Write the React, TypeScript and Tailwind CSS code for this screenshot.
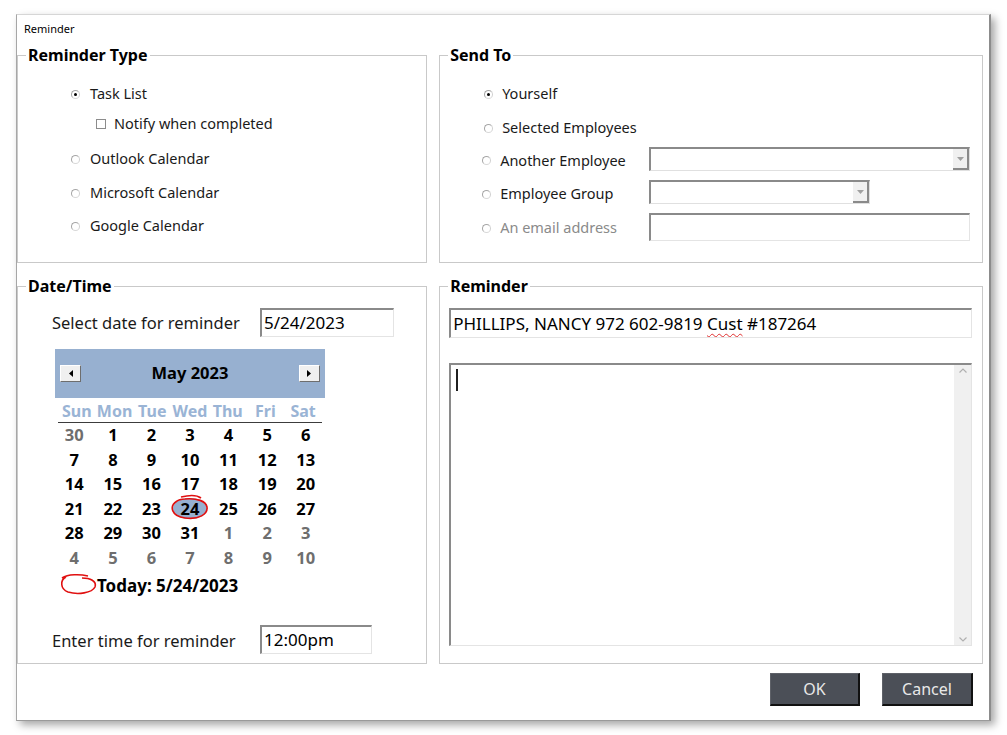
import React from "react";

function Radio({ checked }: { checked?: boolean }) {
  return (
    <span className="inline-flex w-[9px] h-[9px] rounded-full border border-[#a6a6a6] border-b-[#d8d8d8] border-r-[#d0d0d0] bg-white items-center justify-center shrink-0">
      {checked && <span className="block w-[3px] h-[3px] rounded-full bg-black" />}
    </span>
  );
}

function Check() {
  return <span className="inline-block w-[10px] h-[10px] border border-[#8c8c8c] bg-white shrink-0" />;
}

function Combo({ w }: { w: string }) {
  return (
    <div className={`${w} h-[24px] flex bg-white border-t-2 border-l-2 border-t-[#8a8a8a] border-l-[#8a8a8a] border-b border-r border-b-[#e0e0e0] border-r-[#e0e0e0]`}>
      <div className="flex-1" />
      <div className="w-[16px] h-full bg-[#f0f0f0] border-r-2 border-b-2 border-r-[#8a8a8a] border-b-[#8a8a8a] flex items-center justify-center">
        <svg width="7" height="4" viewBox="0 0 7 4"><path d="M0 0H7L3.5 4Z" fill="#a0a0a0" /></svg>
      </div>
    </div>
  );
}

function TextBox({ w, h, children }: { w: string; h: string; children?: React.ReactNode }) {
  return (
    <div className={`${w} ${h} flex items-center pl-[2px] bg-white border-t-2 border-l-2 border-t-[#8a8a8a] border-l-[#8a8a8a] border-b border-r border-b-[#e4e4e4] border-r-[#e4e4e4] text-[17px] text-black whitespace-nowrap overflow-hidden`}>
      {children}
    </div>
  );
}

function Group({ title, className, children }: { title: string; className: string; children: React.ReactNode }) {
  return (
    <fieldset className={`border border-[#c9c9c9] ${className}`}>
      <legend className="ml-[8px] px-[2px] text-[16px] leading-[22px] font-bold text-black">{title}</legend>
      {children}
    </fieldset>
  );
}

const weeks: [string, boolean][][] = [
  [["30", false], ["1", true], ["2", true], ["3", true], ["4", true], ["5", true], ["6", true]],
  [["7", true], ["8", true], ["9", true], ["10", true], ["11", true], ["12", true], ["13", true]],
  [["14", true], ["15", true], ["16", true], ["17", true], ["18", true], ["19", true], ["20", true]],
  [["21", true], ["22", true], ["23", true], ["24", true], ["25", true], ["26", true], ["27", true]],
  [["28", true], ["29", true], ["30", true], ["31", true], ["1", false], ["2", false], ["3", false]],
  [["4", false], ["5", false], ["6", false], ["7", false], ["8", false], ["9", false], ["10", false]],
];

function ArrowBtn({ dir }: { dir: "l" | "r" }) {
  return (
    <div className="w-[21px] h-[17px] bg-[#f0f0f0] border border-t-white border-l-white border-b-[#6e6e6e] border-r-[#6e6e6e] flex items-center justify-center">
      <svg width="4" height="7" viewBox="0 0 4 7">
        {dir === "l" ? <path d="M4 0V7L0 3.5Z" fill="#000" /> : <path d="M0 0V7L4 3.5Z" fill="#000" />}
      </svg>
    </div>
  );
}

export default function App() {
  return (
    <div className="w-[1007px] h-[735px] bg-white pl-[16px] pt-[14px] font-['Noto_Sans',sans-serif] text-[#1a1a1a]">
      <div className="w-[975px] h-[707px] bg-white border-l border-l-[#a6a6a6] border-t border-t-[#d6d6d6] border-r-2 border-r-[#8c8c8c] border-b border-b-[#9a9a9a] shadow-[4px_4px_8px_rgba(0,0,0,0.35)] flex flex-col">
        <div className="h-[29px] pl-[7px] flex items-center text-[11px] text-black">Reminder</div>

        <div className="flex gap-[12px] pr-[6px]">
          <Group title="Reminder Type" className="w-[411px] h-[219px]">
            <div className="flex flex-col pl-[53px] text-[14.5px]">
              <div className="mt-[18px] h-[20px] flex items-center gap-[10px]"><Radio checked /><span>Task List</span></div>
              <div className="mt-[10px] h-[20px] flex items-center gap-[8px] pl-[25px]"><Check /><span>Notify when completed</span></div>
              <div className="mt-[15px] h-[20px] flex items-center gap-[10px]"><Radio /><span>Outlook Calendar</span></div>
              <div className="mt-[14px] h-[20px] flex items-center gap-[10px]"><Radio /><span>Microsoft Calendar</span></div>
              <div className="mt-[13px] h-[20px] flex items-center gap-[10px]"><Radio /><span>Google Calendar</span></div>
            </div>
          </Group>
          <Group title="Send To" className="w-[545px] h-[219px]">
            <div className="flex flex-col text-[14.5px]">
              <div className="mt-[18px] h-[20px] flex items-center gap-[9px] pl-[44px]"><Radio checked /><span>Yourself</span></div>
              <div className="mt-[14px] h-[20px] flex items-center gap-[9px] pl-[44px]"><Radio /><span>Selected Employees</span></div>
              <div className="mt-[9px] h-[24px] flex items-center pl-[42px]">
                <div className="w-[167px] pt-[3px] flex items-center gap-[9px]"><Radio /><span>Another Employee</span></div>
                <Combo w="w-[321px]" />
              </div>
              <div className="mt-[9px] h-[24px] flex items-center pl-[42px]">
                <div className="w-[167px] pt-[4px] flex items-center gap-[9px]"><Radio /><span>Employee Group</span></div>
                <Combo w="w-[221px]" />
              </div>
              <div className="mt-[9px] h-[28px] flex items-center pl-[42px]">
                <div className="w-[167px] pt-[2px] flex items-center gap-[9px] text-[#8a8a8a]"><Radio /><span>An email address</span></div>
                <TextBox w="w-[321px]" h="h-[28px]" />
              </div>
            </div>
          </Group>
        </div>

        <div className="flex gap-[12px] pr-[6px] mt-[12px]">
          <Group title="Date/Time" className="w-[411px] h-[389px]">
            <div className="flex flex-col">
              <div className="mt-[11px] flex items-center pl-[34px]">
                <span className="w-[208px] pt-[2px] text-[16.5px]">Select date for reminder</span>
                <TextBox w="w-[134px]" h="h-[29px]">5/24/2023</TextBox>
              </div>
              <div className="mt-[12px] ml-[37px] w-[270px] relative">
                <div className="h-[49px] bg-[#97b0d0] flex items-center justify-between px-[5px]">
                  <ArrowBtn dir="l" />
                  <span className="text-[16.5px] font-bold text-black">May 2023</span>
                  <ArrowBtn dir="r" />
                </div>
                <div className="mx-[3px] h-[25px] grid grid-cols-7 items-end border-b border-b-[#3c3c3c] text-[16px] font-bold text-[#9ab4d5] leading-[22px]">
                  {["Sun", "Mon", "Tue", "Wed", "Thu", "Fri", "Sat"].map((d) => (
                    <span key={d} className="text-center">{d}</span>
                  ))}
                </div>
                <div className="flex flex-col">
                  {weeks.map((w, i) => (
                    <div key={i} className="h-[24.6px] grid grid-cols-7 items-center text-[16.5px] font-bold">
                      {w.map(([d, cur], j) => (
                        <span key={j} className={`text-center ${cur ? "text-black" : "text-[#6e6e6e]"}`}>
                          {i === 3 && j === 3 ? (
                            <span className="inline-block w-[34px] h-[21px] leading-[21px] rounded-[50%] bg-[#97b0d0]">{d}</span>
                          ) : (
                            d
                          )}
                        </span>
                      ))}
                    </div>
                  ))}
                </div>
                <div className="mt-[3px] h-[24px] flex items-center pl-[42px] text-[17px] font-bold text-black">Today: 5/24/2023</div>
                <svg className="absolute left-[112px] top-[145px] pointer-events-none" width="44" height="32" viewBox="0 0 44 32">
                  <path d="M14 3 C 22 1, 30 1, 34 4 M10 7 C 2 12, 4 22, 18 24 C 32 26, 41 20, 40 13 C 39 7, 30 4, 18 5 C 14 5, 11 6, 9 8" fill="none" stroke="#e01010" strokeWidth="1.6" />
                </svg>
                <svg className="absolute left-[3px] top-[224px] pointer-events-none" width="40" height="24" viewBox="0 0 40 24">
                  <path d="M4 5 C 10 1, 22 1, 30 3 M8 4 C 2 7, 2 16, 10 19 C 20 22, 34 20, 37 14 C 39 8, 32 5, 24 5" fill="none" stroke="#e01010" strokeWidth="1.6" />
                </svg>
              </div>
              <div className="mt-[27px] flex items-center pl-[34px]">
                <span className="w-[208px] pt-[4px] text-[16.5px]">Enter time for reminder</span>
                <TextBox w="w-[112px]" h="h-[29px]">12:00pm</TextBox>
              </div>
            </div>
          </Group>
          <Group title="Reminder" className="w-[545px] h-[389px]">
            <div className="flex flex-col pl-[9px]">
              <div className="mt-[11px]">
                <TextBox w="w-[523px]" h="h-[30px]">
                  <span>PHILLIPS, NANCY 972 602-9819 <span className="underline decoration-wavy decoration-[#e03030] decoration-1 underline-offset-[3px]">Cust</span> #187264</span>
                </TextBox>
              </div>
              <div className="mt-[25px] w-[523px] h-[283px] flex bg-white border-t-2 border-l-2 border-t-[#8a8a8a] border-l-[#8a8a8a] border-b border-r border-b-[#e4e4e4] border-r-[#e4e4e4]">
                <div className="flex-1 pl-[5px] pt-[4px]">
                  <div className="w-[2px] h-[22px] bg-[#202020]" />
                </div>
                <div className="w-[17px] bg-[#f0f0f0] flex flex-col justify-between items-center py-[3px]">
                  <svg width="8" height="5" viewBox="0 0 8 5"><path d="M0.5 4.5L4 1L7.5 4.5" fill="none" stroke="#b0b0b0" strokeWidth="1.2" /></svg>
                  <svg width="8" height="5" viewBox="0 0 8 5"><path d="M0.5 0.5L4 4L7.5 0.5" fill="none" stroke="#b0b0b0" strokeWidth="1.2" /></svg>
                </div>
              </div>
            </div>
          </Group>
        </div>

        <div className="mt-[9px] flex justify-end gap-[22px] pr-[16px]">
          <button className="w-[90px] h-[33px] bg-[#4b4f57] border border-t-[#5e6168] border-l-[#5e6168] border-b-2 border-r-2 border-b-[#111] border-r-[#111] text-[#e8e8e8] text-[16px]">OK</button>
          <button className="w-[91px] h-[33px] bg-[#4b4f57] border border-t-[#5e6168] border-l-[#5e6168] border-b-2 border-r-2 border-b-[#111] border-r-[#111] text-[#e8e8e8] text-[16px]">Cancel</button>
        </div>
      </div>
    </div>
  );
}
